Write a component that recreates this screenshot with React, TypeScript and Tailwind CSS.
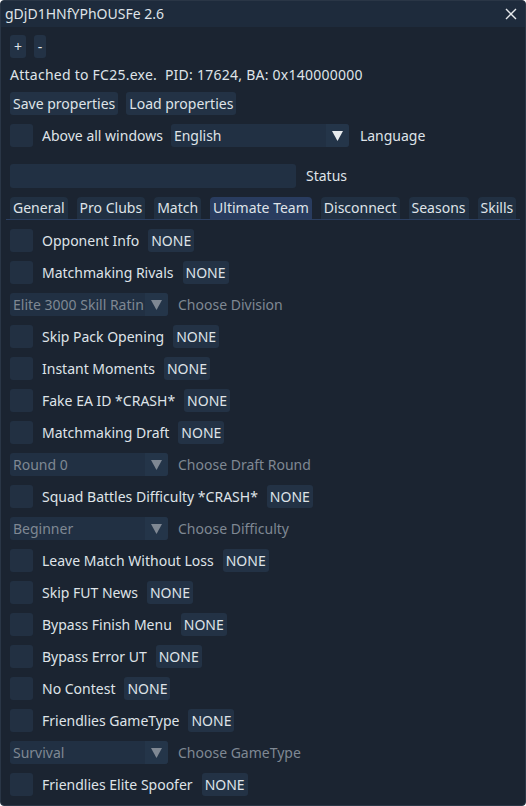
import React from "react";

function Btn({ children, className = "" }: { children: React.ReactNode; className?: string }) {
  return (
    <div className={"h-[23px] px-[3px] flex items-center justify-center rounded-[3px] bg-[#233245] text-[#dfe3e8] whitespace-nowrap " + className}>
      {children}
    </div>
  );
}

function Check() {
  return <div className="w-[23px] h-[23px] shrink-0 rounded-[3px] bg-[#223042]" />;
}

function Arrow() {
  return (
    <svg width="11" height="10" viewBox="0 0 11 10">
      <path d="M0 0 H11 L5.5 10 Z" fill="currentColor" />
    </svg>
  );
}

function Combo({ value, wide, disabled }: { value: string; wide?: boolean; disabled?: boolean }) {
  return (
    <div
      className={
        "h-[23px] flex rounded-[3px] bg-[#213043] overflow-hidden shrink-0 " +
        (wide ? "w-[178px] " : "w-[158px] ") +
        (disabled ? "text-[#7f8893]" : "text-[#dfe3e8]")
      }
    >
      <div className="flex-1 px-[3px] flex items-center whitespace-nowrap overflow-hidden">{value}</div>
      <div className={"w-[23px] flex items-center justify-center bg-[#243549] " + (disabled ? "text-[#7f8893]" : "text-[#e8ebee]")}>
        <Arrow />
      </div>
    </div>
  );
}

function Toggle({ label }: { label: string }) {
  return (
    <div className="flex items-center gap-[9px] h-[23px]">
      <Check />
      <span className="whitespace-nowrap">{label}</span>
      <Btn>NONE</Btn>
    </div>
  );
}

function Pick({ value, label }: { value: string; label: string }) {
  return (
    <div className="flex items-center gap-[10px] h-[23px] text-[#7f8893]">
      <Combo value={value} disabled />
      <span className="whitespace-nowrap">{label}</span>
    </div>
  );
}

const tabs = ["General", "Pro Clubs", "Match", "Ultimate Team", "Disconnect", "Seasons", "Skills"];

export default function App() {
  return (
    <div className="w-[526px] h-[806px] bg-[#1b2431] text-[#dfe3e8] text-[14px] leading-[16px] font-['Noto_Sans',sans-serif] overflow-hidden rounded-[4px] border border-[#2a3646] flex flex-col">
      {/* title bar */}
      <div className="h-[26px] shrink-0 bg-[#1e2b3c] flex items-center justify-between pl-[4px] pr-[8px]">
        <span>gDjD1HNfYPhOUSFe 2.6</span>
        <svg width="12" height="12" viewBox="0 0 12 12" className="text-[#e6e9ec]">
          <path d="M1 1 L11 11 M11 1 L1 11" stroke="currentColor" strokeWidth="1.4" />
        </svg>
      </div>

      <div className="flex flex-col gap-[9px] pt-[8px] px-[9px]">
        <div className="flex gap-[8px]">
          <Btn className="w-[16px]">+</Btn>
          <Btn className="w-[12px]">-</Btn>
        </div>
        <div className="h-[16px] flex items-center whitespace-nowrap tracking-[0.25px]">Attached to FC25.exe.&nbsp; PID: 17624, BA: 0x140000000</div>
        <div className="flex gap-[8px]">
          <Btn>Save properties</Btn>
          <Btn>Load properties</Btn>
        </div>
        <div className="flex items-center h-[23px]">
          <Check />
          <span className="ml-[9px] whitespace-nowrap">Above all windows</span>
          <div className="ml-[8px]">
            <Combo value="English" wide />
          </div>
          <span className="ml-[11px]">Language</span>
        </div>
        <div className="flex items-center h-[24px] gap-[10px] mt-[8px]">
          <div className="w-[286px] h-[24px] rounded-[3px] bg-[#213043]" />
          <span>Status</span>
        </div>

        {/* tabs */}
        <div className="-mx-[4px] border-b border-[#2c3f60]">
          <div className="flex gap-[9px] px-[4px]">
            {tabs.map((t) => (
              <div
                key={t}
                className={
                  "h-[22px] px-[3px] flex items-center rounded-t-[4px] whitespace-nowrap " +
                  (t === "Ultimate Team" ? "bg-[#293c5f]" : "bg-[#213042]")
                }
              >
                {t}
              </div>
            ))}
          </div>
        </div>

        <Toggle label="Opponent Info" />
        <Toggle label="Matchmaking Rivals" />
        <Pick value="Elite 3000 Skill Ratin" label="Choose Division" />
        <Toggle label="Skip Pack Opening" />
        <Toggle label="Instant Moments" />
        <Toggle label="Fake EA ID *CRASH*" />
        <Toggle label="Matchmaking Draft" />
        <Pick value="Round 0" label="Choose Draft Round" />
        <Toggle label="Squad Battles Difficulty *CRASH*" />
        <Pick value="Beginner" label="Choose Difficulty" />
        <Toggle label="Leave Match Without Loss" />
        <Toggle label="Skip FUT News" />
        <Toggle label="Bypass Finish Menu" />
        <Toggle label="Bypass Error UT" />
        <Toggle label="No Contest" />
        <Toggle label="Friendlies GameType" />
        <Pick value="Survival" label="Choose GameType" />
        <Toggle label="Friendlies Elite Spoofer" />
      </div>
    </div>
  );
}
